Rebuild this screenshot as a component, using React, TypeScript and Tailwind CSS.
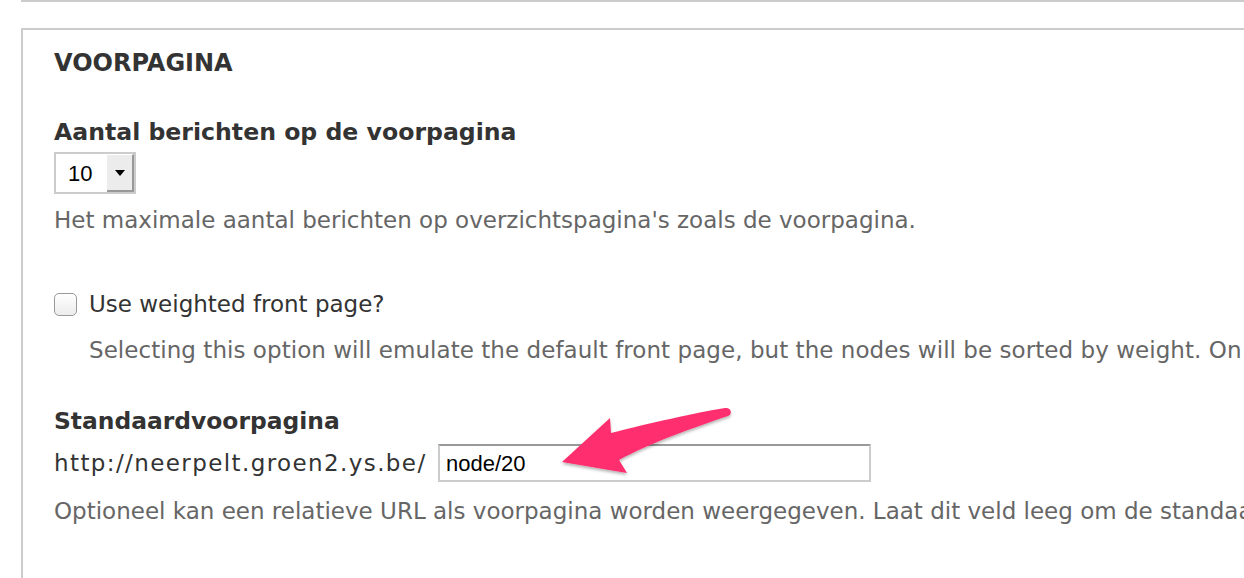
import React from "react";

const font = { fontFamily: '"DejaVu Sans", "Lucida Grande", Verdana, sans-serif' };
const arial = { fontFamily: '"Liberation Sans", Arial, sans-serif' };

function Arrow() {
  return (
    <svg className="absolute left-[555px] top-[405px]" width="185" height="80" viewBox="0 0 185 80">
      <defs>
        <filter id="sh" x="-20%" y="-20%" width="140%" height="150%">
          <feDropShadow dx="0" dy="2" stdDeviation="1.5" floodColor="#000" floodOpacity="0.3" />
        </filter>
      </defs>
      <path
        d="M7 57 L55 13 L56 28 C95 18 140 8 170 3 C176 2 178 9 173 11 C140 22 95 38 64 55 L72 68 Z"
        fill="#ff2d6e"
        filter="url(#sh)"
      />
    </svg>
  );
}

export default function App() {
  return (
    <div className="relative w-[1244px] h-[578px] overflow-hidden bg-white text-[#333]" style={font}>
      {/* top rule */}
      <div className="ml-[21px] h-[2px] bg-[#ccc]" />

      {/* fieldset */}
      <div className="ml-[21px] mt-[26px] border-t-2 border-l-2 border-[#ccc] pl-[31px] pt-[18px] h-[560px]">
        <h2 className="text-[24px] font-bold leading-[30px]">VOORPAGINA</h2>

        <div className="mt-[39px]">
          <label className="block text-[23.6px] font-bold leading-[30px]">Aantal berichten op de voorpagina</label>
          <div className="mt-[5px] flex w-[82px] h-[42px] border-2 border-[#ccc] bg-white">
            <div className="flex-1 flex items-center pl-[12px] text-[22px] text-black" style={arial}>
              10
            </div>
            <div className="w-[27px] h-full flex items-center justify-center bg-[#ececec] border-r-2 border-b-2 border-[#999] border-t border-t-white">
              <svg width="10" height="6" viewBox="0 0 10 6">
                <path d="M0 0 H10 L5 6 Z" fill="#000" />
              </svg>
            </div>
          </div>
          <p className="mt-[11px] text-[23px] leading-[30px] text-[#666]">
            Het maximale aantal berichten op overzichtspagina's zoals de voorpagina.
          </p>
        </div>

        <div className="mt-[54px]">
          <div className="flex items-center gap-[12px]">
            <div className="w-[23px] h-[23px] rounded-[5px] border border-[#999] bg-gradient-to-b from-white to-[#ececec]" />
            <span className="text-[23px] leading-[30px]">Use weighted front page?</span>
          </div>
          <p className="mt-[16px] ml-[35px] whitespace-nowrap text-[23px] leading-[30px] tracking-[0.05px] text-[#666]">
            Selecting this option will emulate the default front page, but the nodes will be sorted by weight. On
          </p>
        </div>

        <div className="mt-[41px]">
          <label className="block text-[23.4px] font-bold leading-[30px]">Standaardvoorpagina</label>
          <div className="mt-[8px] flex items-center">
            <span className="w-[384px] text-[23px] leading-[30px] tracking-[1.4px]">http://neerpelt.groen2.ys.be/</span>
            <div
              className="w-[433px] h-[38px] flex items-center pl-[6px] border-2 border-[#ccc] border-t-[#999] text-[22px] text-black"
              style={arial}
            >
              node/20
            </div>
          </div>
          <p className="mt-[14px] whitespace-nowrap text-[23px] leading-[30px] text-[#666]">
            Optioneel kan een relatieve URL als voorpagina worden weergegeven. Laat dit veld leeg om de standaa
          </p>
        </div>
      </div>

      <Arrow />
    </div>
  );
}
